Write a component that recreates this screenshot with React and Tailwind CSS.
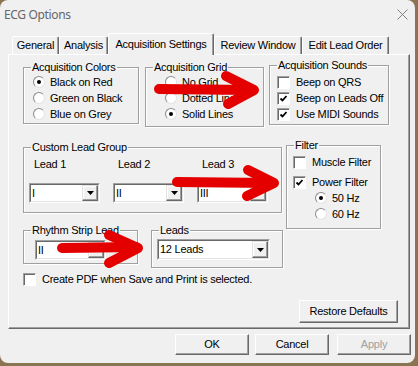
import React from 'react';

const RED = '#e50000';

function Radio({ checked, children }) {
    return (
        <div className="flex h-[16px] items-center">
            <span className="flex h-[12px] w-[12px] items-center justify-center rounded-full border border-b-[#e3e3e3] border-l-[#8a8a8a] border-r-[#e3e3e3] border-t-[#8a8a8a] bg-white">
                {checked && <span className="h-[4px] w-[4px] rounded-full bg-black" />}
            </span>
            <span className="ml-[5px]">{children}</span>
        </div>
    );
}

function Check({ checked, children }) {
    return (
        <div className="flex h-[16px] items-center">
            <span className="flex h-[13px] w-[13px] items-center justify-center border border-b-white border-l-[#a0a0a0] border-r-white border-t-[#a0a0a0] bg-white shadow-[inset_1px_1px_0_#696969]">
                {checked && (
                    <svg width="9" height="9" viewBox="0 0 9 9">
                        <path d="M1.5 4.5 L3.5 6.5 L7.5 2" fill="none" stroke="#000" strokeWidth="1.8" />
                    </svg>
                )}
            </span>
            <span className="ml-[6px]">{children}</span>
        </div>
    );
}

function Combo({ value, className = '' }) {
    return (
        <div className={`flex border border-b-white border-l-[#a0a0a0] border-r-white border-t-[#a0a0a0] ${className}`}>
            <div className="flex flex-1 border border-b-[#e3e3e3] border-l-[#696969] border-r-[#e3e3e3] border-t-[#696969] bg-white">
                <span className="flex flex-1 items-center pl-[1px]">{value}</span>
                <span className="flex w-[16px] items-center justify-center border border-b-[#696969] border-l-[#e3e3e3] border-r-[#696969] border-t-[#e3e3e3] bg-[#f0f0f0] shadow-[inset_-1px_-1px_0_#a0a0a0,inset_1px_1px_0_#fff]">
                    <svg width="7" height="4" viewBox="0 0 7 4">
                        <path d="M0 0h7L3.5 4z" fill="#000" />
                    </svg>
                </span>
            </div>
        </div>
    );
}

function Btn({ className = '', disabled, children }) {
    return (
        <div
            className={`flex items-center justify-center border border-b-[#696969] border-l-white border-r-[#696969] border-t-white bg-[#f0f0f0] shadow-[inset_-1px_-1px_0_#a0a0a0] ${disabled ? 'text-[#a0a0a0]' : 'text-black'} ${className}`}
        >
            {children}
        </div>
    );
}

function Tab({ className = '', active, children }) {
    return (
        <div
            className={`flex items-center justify-center rounded-t-[2px] border border-b-0 border-l-white border-r-[#696969] border-t-white bg-[#f0f0f0] shadow-[inset_-1px_0_0_#a0a0a0] ${active ? 'relative z-10 -mb-px h-[22px]' : 'h-[18px]'} ${className}`}
        >
            {children}
        </div>
    );
}

const box = 'border border-[#a0a0a0] shadow-[inset_1px_1px_0_#fff,1px_1px_0_#fff]';

function Legend({ children }) {
    return <legend className="ml-[7px] px-[1px] leading-[13px]">{children}</legend>;
}

export default function App() {
    return (
        <div className="relative h-[366px] w-[418px] overflow-hidden bg-[#8a7552] font-['Liberation_Sans',Arial,sans-serif] text-[11px] leading-[13px] tracking-[-0.25px] text-black">
            <div className="flex h-[363px] w-[415px] flex-col rounded-[8px] bg-[#f0f0f0]">
                {/* title bar */}
                <div className="flex h-[28px] items-center justify-between pl-[4px] pr-[7px]">
                    <span className="font-['Noto_Sans',sans-serif] text-[12px] tracking-[-0.35px] text-[#666]">ECG Options</span>
                    <svg width="11" height="11" viewBox="0 0 11 11">
                        <path d="M0.5 0.5L10.5 10.5M10.5 0.5L0.5 10.5" stroke="#808080" strokeWidth="1" />
                    </svg>
                </div>

                {/* tabs */}
                <div className="flex h-[26px] items-end pl-[12px]">
                    <Tab className="w-[47px]">General</Tab>
                    <Tab className="w-[49px]">Analysis</Tab>
                    <Tab className="w-[106px]" active>Acquisition Settings</Tab>
                    <Tab className="w-[88px]">Review Window</Tab>
                    <Tab className="w-[87px]">Edit Lead Order</Tab>
                </div>

                {/* tab page */}
                <div className="ml-[8px] flex h-[275px] w-[402px] flex-col border border-b-[#696969] border-l-white border-r-[#696969] border-t-white pl-[14px] shadow-[inset_-1px_-1px_0_#a0a0a0]">
                    <div className="mt-[4px] flex items-start">
                        <fieldset className={`mt-[2px] h-[63px] w-[116px] ${box}`}>
                            <Legend>Acquisition Colors</Legend>
                            <div className="pl-[9px]">
                                <Radio checked>Black on Red</Radio>
                                <Radio>Green on Black</Radio>
                                <Radio>Blue on Grey</Radio>
                            </div>
                        </fieldset>
                        <fieldset className={`ml-[6px] mt-[2px] h-[66px] w-[119px] ${box}`}>
                            <Legend>Acquisition Grid</Legend>
                            <div className="pl-[19px]">
                                <Radio>No Grid</Radio>
                                <Radio>Dotted Lines</Radio>
                                <Radio checked>Solid Lines</Radio>
                            </div>
                        </fieldset>
                        <fieldset className={`ml-[5px] h-[66px] w-[120px] ${box}`}>
                            <Legend>Acquisition Sounds</Legend>
                            <div className="pl-[7px] pt-[2px]">
                                <Check>Beep on QRS</Check>
                                <Check checked>Beep on Leads Off</Check>
                                <Check checked>Use MIDI Sounds</Check>
                            </div>
                        </fieldset>
                    </div>

                    <div className="flex items-start">
                        <div className="flex w-[260px] flex-col">
                            <fieldset className={`mt-[14px] h-[72px] w-[256px] ${box}`}>
                                <Legend>Custom Lead Group</Legend>
                                <div className="mt-[4px] flex pl-[5px]">
                                    {['I', 'II', 'III'].map((v, i) => (
                                        <div key={v} className="flex w-[84px] flex-col">
                                            <span className="pl-[5px]">Lead {i + 1}</span>
                                            <Combo value={v} className="mt-[12px] h-[20px] w-[71px]" />
                                        </div>
                                    ))}
                                </div>
                            </fieldset>
                            <div className="mt-[11px] flex items-start">
                                <fieldset className={`h-[40px] w-[115px] ${box}`}>
                                    <Legend>Rhythm Strip Lead</Legend>
                                    <Combo value="II" className="ml-[11px] mt-[3px] h-[20px] w-[71px]" />
                                </fieldset>
                                <fieldset className={`ml-[13px] h-[44px] w-[132px] ${box}`}>
                                    <Legend>Leads</Legend>
                                    <Combo value="12 Leads" className="ml-[5px] mt-[2px] h-[21px] w-[113px]" />
                                </fieldset>
                            </div>
                        </div>
                        <fieldset className={`ml-[3px] mt-[12px] h-[90px] w-[95px] ${box}`}>
                            <Legend>Filter</Legend>
                            <div className="mt-[2px] pl-[6px]">
                                <Check>Muscle Filter</Check>
                                <div className="mt-[4px]">
                                    <Check checked>Power Filter</Check>
                                </div>
                                <div className="pl-[22px]">
                                    <Radio checked>50 Hz</Radio>
                                    <Radio>60 Hz</Radio>
                                </div>
                            </div>
                        </fieldset>
                    </div>

                    <div className="mt-[3px]">
                        <Check>Create PDF when Save and Print is selected.</Check>
                    </div>

                    <Btn className="ml-[276px] mt-[13px] h-[23px] w-[99px]">Restore Defaults</Btn>
                </div>

                {/* dialog buttons */}
                <div className="ml-[175px] mt-[5px] flex">
                    <Btn className="h-[21px] w-[74px]">OK</Btn>
                    <Btn className="ml-[6px] h-[21px] w-[74px]">Cancel</Btn>
                    <Btn className="ml-[8px] h-[21px] w-[74px]" disabled>Apply</Btn>
                </div>
            </div>

            {/* red annotation arrows */}
            <svg className="pointer-events-none absolute inset-0" width="418" height="366" viewBox="0 0 418 366">
                <g fill="none" stroke={RED} strokeWidth="10" strokeLinecap="round" strokeLinejoin="round">
                    <path d="M159 89 L250 90" />
                    <path d="M226 76 L254 90 L228 104" />
                    <path d="M177 182 L270 183" />
                    <path d="M248 170 L274 183 L247 196" />
                    <path d="M62 248 L136 247" />
                    <path d="M109 235 L138 248 L109 263" />
                </g>
            </svg>
        </div>
    );
}
